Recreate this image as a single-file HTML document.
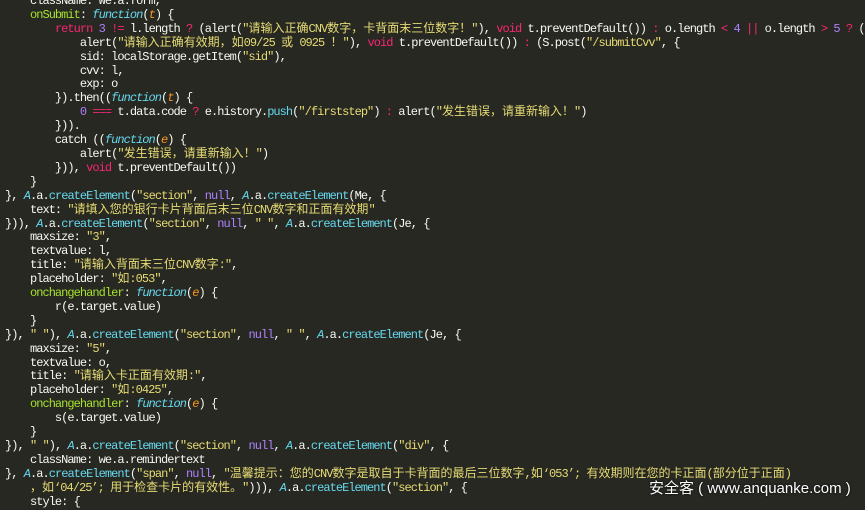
<!DOCTYPE html>
<html><head><meta charset="utf-8"><style>
html,body{margin:0;padding:0;background:#272822;width:865px;height:505px;overflow:hidden}
pre{margin:0;position:absolute;left:5px;top:-5px;font-family:"Liberation Mono","Noto Sans CJK SC",monospace;font-size:12px;letter-spacing:-0.96px;line-height:13.9px;color:#f8f8f2;white-space:pre}
.k{color:#f92672}.s{color:#e6db74}.n{color:#ae81ff}.f{color:#66d9ef;font-style:italic}.p{color:#fd971f;font-style:italic}.g{color:#a6e22e}.c{color:#66d9ef}
.z{letter-spacing:0}
.wm{position:absolute;left:649px;top:477px;font-family:"Liberation Sans","Noto Sans CJK SC",sans-serif;font-size:15px;color:#fff;white-space:pre;text-shadow:0 0 2px #000}
</style></head><body><pre>    className: We.a.form,
    <span class="g">onSubmit</span>: <span class="f">function</span>(<span class="p">t</span>) {
        <span class="k">return</span> <span class="n">3</span> <span class="k">!=</span> l.length <span class="k">?</span> (alert(<span class="s">"<span class="z">请输入正确</span>CNV<span class="z">数字，卡背面末三位数字！</span>"</span>), <span class="k">void</span> t.preventDefault()) <span class="k">:</span> o.length <span class="k">&lt;</span> <span class="n">4</span> <span class="k">||</span> o.length <span class="k">&gt;</span> <span class="n">5</span> <span class="k">?</span> (
            alert(<span class="s">"<span class="z">请输入正确有效期，如</span>09/25 <span class="z">或</span> 0925 <span class="z">！</span>"</span>), <span class="k">void</span> t.preventDefault()) <span class="k">:</span> (S.post(<span class="s">"/submitCvv"</span>, {
            sid: localStorage.getItem(<span class="s">"sid"</span>),
            cvv: l,
            exp: o
        }).then((<span class="f">function</span>(<span class="p">t</span>) {
            <span class="n">0</span> <span class="k">===</span> t.data.code <span class="k">?</span> e.history.<span class="c">push</span>(<span class="s">"/firststep"</span>) <span class="k">:</span> alert(<span class="s">"<span class="z">发生错误，请重新输入！</span>"</span>)
        })).
        catch ((<span class="f">function</span>(<span class="p">e</span>) {
            alert(<span class="s">"<span class="z">发生错误，请重新输入！</span>"</span>)
        })), <span class="k">void</span> t.preventDefault())
    }
}, <span class="f">A</span>.a.<span class="c">createElement</span>(<span class="s">"section"</span>, <span class="n">null</span>, <span class="f">A</span>.a.<span class="c">createElement</span>(Me, {
    text: <span class="s">"<span class="z">请填入您的银行卡片背面后末三位</span>CNV<span class="z">数字和正面有效期</span>"</span>
})), <span class="f">A</span>.a.<span class="c">createElement</span>(<span class="s">"section"</span>, <span class="n">null</span>, <span class="s">" "</span>, <span class="f">A</span>.a.<span class="c">createElement</span>(Je, {
    maxsize: <span class="s">"3"</span>,
    textvalue: l,
    title: <span class="s">"<span class="z">请输入背面末三位</span>CNV<span class="z">数字</span>:"</span>,
    placeholder: <span class="s">"<span class="z">如</span>:053"</span>,
    <span class="g">onchangehandler</span>: <span class="f">function</span>(<span class="p">e</span>) {
        r(e.target.value)
    }
}), <span class="s">" "</span>), <span class="f">A</span>.a.<span class="c">createElement</span>(<span class="s">"section"</span>, <span class="n">null</span>, <span class="s">" "</span>, <span class="f">A</span>.a.<span class="c">createElement</span>(Je, {
    maxsize: <span class="s">"5"</span>,
    textvalue: o,
    title: <span class="s">"<span class="z">请输入卡正面有效期</span>:"</span>,
    placeholder: <span class="s">"<span class="z">如</span>:0425"</span>,
    <span class="g">onchangehandler</span>: <span class="f">function</span>(<span class="p">e</span>) {
        s(e.target.value)
    }
}), <span class="s">" "</span>), <span class="f">A</span>.a.<span class="c">createElement</span>(<span class="s">"section"</span>, <span class="n">null</span>, <span class="f">A</span>.a.<span class="c">createElement</span>(<span class="s">"div"</span>, {
    className: we.a.remindertext
}, <span class="f">A</span>.a.<span class="c">createElement</span>(<span class="s">"span"</span>, <span class="n">null</span>, <span class="s">"<span class="z">温馨提示：您的</span>CNV<span class="z">数字是取自于卡背面的最后三位数字</span>,<span class="z">如</span>‘053’; <span class="z">有效期则在您的卡正面</span>(<span class="z">部分位于正面</span>)</span>
<span class="s">    <span class="z">，如</span>‘04/25’; <span class="z">用于检查卡片的有效性。</span>"</span>))), <span class="f">A</span>.a.<span class="c">createElement</span>(<span class="s">"section"</span>, {
    style: {</pre>
<div class="wm">安全客 ( www.anquanke.com )</div>
</body></html>
